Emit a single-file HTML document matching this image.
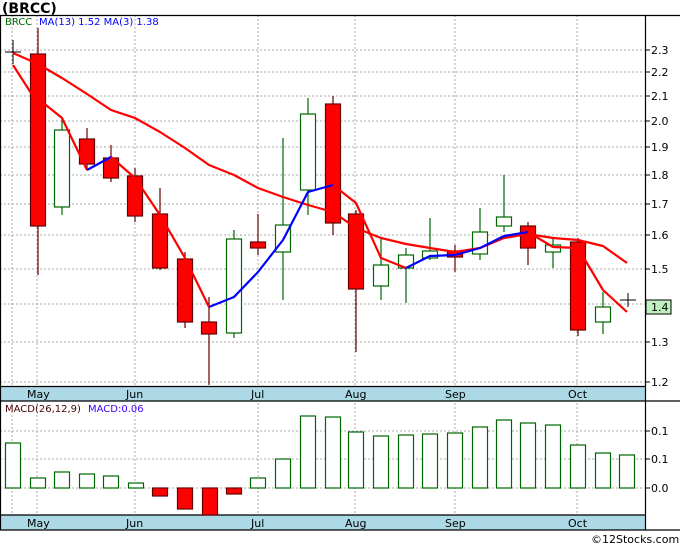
<!DOCTYPE html>
<html><head><style>
body{margin:0;background:#fff;width:680px;height:546px;overflow:hidden;font-family:"DejaVu Sans","Liberation Sans",sans-serif}
</style></head><body>
<svg width="680" height="546" xmlns="http://www.w3.org/2000/svg" font-family="DejaVu Sans, Liberation Sans, sans-serif">
<rect x="0" y="0" width="680" height="15" fill="#fff"/>
<text x="2" y="13" font-size="14" font-weight="bold" fill="#000">(BRCC)</text>
<rect x="0" y="15" width="680" height="515" fill="#fff"/>
<g stroke="#aaa" stroke-dasharray="2,2" stroke-width="1">
<line x1="0" x2="645" y1="50" y2="50"/><line x1="0" x2="645" y1="72" y2="72"/><line x1="0" x2="645" y1="96" y2="96"/><line x1="0" x2="645" y1="121" y2="121"/><line x1="0" x2="645" y1="147" y2="147"/><line x1="0" x2="645" y1="175" y2="175"/><line x1="0" x2="645" y1="204" y2="204"/><line x1="0" x2="645" y1="235" y2="235"/><line x1="0" x2="645" y1="269" y2="269"/><line x1="0" x2="645" y1="304" y2="304"/><line x1="0" x2="645" y1="342" y2="342"/><line x1="0" x2="645" y1="382" y2="382"/>
<line x1="0" x2="645" y1="431" y2="431"/><line x1="0" x2="645" y1="459" y2="459"/><line x1="0" x2="645" y1="488" y2="488"/>
<g>
<line x1="12" x2="12" y1="15" y2="515"/><line x1="37" x2="37" y1="15" y2="515"/><line x1="135" x2="135" y1="15" y2="515"/><line x1="258" x2="258" y1="15" y2="515"/><line x1="355" x2="355" y1="15" y2="515"/><line x1="455" x2="455" y1="15" y2="515"/><line x1="577" x2="577" y1="15" y2="515"/>
</g></g>
<rect x="0" y="387" width="645" height="14" fill="#add8e6"/>
<rect x="0" y="515" width="645" height="15" fill="#add8e6"/>
<g font-size="11" fill="#000">
<text x="27" y="398">May</text><text x="126" y="398">Jun</text><text x="251" y="398">Jul</text><text x="345" y="398">Aug</text><text x="445" y="398">Sep</text><text x="568" y="398">Oct</text>
<text x="27" y="527">May</text><text x="126" y="527">Jun</text><text x="251" y="527">Jul</text><text x="345" y="527">Aug</text><text x="445" y="527">Sep</text><text x="568" y="527">Oct</text>
</g>
<g stroke="#000" stroke-width="1.2" fill="none">
<line x1="0" x2="680" y1="15.5" y2="15.5"/>
<line x1="0" x2="645" y1="386.5" y2="386.5"/><line x1="0" x2="680" y1="401" y2="401"/>
<line x1="0" x2="645" y1="515" y2="515"/><line x1="0" x2="680" y1="530" y2="530"/>
<line x1="645.5" x2="645.5" y1="15" y2="530"/><line x1="0.5" x2="0.5" y1="15" y2="530"/>
</g>
<g font-size="11" fill="#000">
<text x="651" y="54">2.3</text><text x="651" y="76">2.2</text><text x="651" y="100">2.1</text><text x="651" y="125">2.0</text><text x="651" y="151">1.9</text><text x="651" y="179">1.8</text><text x="651" y="208">1.7</text><text x="651" y="239">1.6</text><text x="651" y="273">1.5</text><text x="651" y="346">1.3</text><text x="651" y="386">1.2</text>
<text x="651" y="435">0.1</text><text x="651" y="463">0.1</text><text x="651" y="492">0.0</text>
</g>
<g stroke="#000"><line x1="645" x2="650" y1="50" y2="50"/><line x1="645" x2="650" y1="72" y2="72"/><line x1="645" x2="650" y1="96" y2="96"/><line x1="645" x2="650" y1="121" y2="121"/><line x1="645" x2="650" y1="147" y2="147"/><line x1="645" x2="650" y1="175" y2="175"/><line x1="645" x2="650" y1="204" y2="204"/><line x1="645" x2="650" y1="235" y2="235"/><line x1="645" x2="650" y1="269" y2="269"/><line x1="645" x2="650" y1="342" y2="342"/><line x1="645" x2="650" y1="382" y2="382"/><line x1="645" x2="650" y1="431" y2="431"/><line x1="645" x2="650" y1="459" y2="459"/><line x1="645" x2="650" y1="488" y2="488"/></g>
<rect x="646" y="300" width="25" height="14" fill="#bff0bf" stroke="#000"/>
<text x="651" y="311" font-size="11">1.4</text>
<g font-size="10"><text x="5" y="25" fill="#060">BRCC</text><text x="39" y="25" fill="#00f">MA(13)  1.52  MA(3)  1.38</text>
<text x="5" y="412" fill="#400">MACD(26,12,9)</text><text x="88" y="412" fill="#40f">MACD:0.06</text></g>
<text x="591" y="543" font-size="11" fill="#000">©12Stocks.com</text>
<g stroke="#000"><line x1="5" x2="21" y1="52" y2="52"/><line x1="13" x2="13" y1="40" y2="64"/><line x1="620" x2="636" y1="300" y2="300"/><line x1="628" x2="628" y1="293" y2="307"/></g>
<g stroke-width="1.2">
<g stroke="#600"><line x1="38" x2="38" y1="28" y2="275"/><line x1="87" x2="87" y1="128" y2="170"/><line x1="111" x2="111" y1="145" y2="182"/><line x1="135" x2="135" y1="168" y2="222"/><line x1="160" x2="160" y1="188" y2="270"/><line x1="185" x2="185" y1="252" y2="328"/><line x1="209" x2="209" y1="297" y2="385"/><line x1="258" x2="258" y1="214" y2="255"/><line x1="333" x2="333" y1="96" y2="235"/><line x1="356" x2="356" y1="210" y2="352"/><line x1="455" x2="455" y1="245" y2="272"/><line x1="528" x2="528" y1="222" y2="265"/><line x1="578" x2="578" y1="238" y2="336"/></g>
<g stroke="#060"><line x1="62" x2="62" y1="118" y2="215"/><line x1="234" x2="234" y1="230" y2="338"/><line x1="283" x2="283" y1="138" y2="300"/><line x1="308" x2="308" y1="98" y2="215"/><line x1="381" x2="381" y1="238" y2="300"/><line x1="406" x2="406" y1="248" y2="303"/><line x1="430" x2="430" y1="218" y2="260"/><line x1="480" x2="480" y1="208" y2="260"/><line x1="504" x2="504" y1="175" y2="232"/><line x1="553" x2="553" y1="238" y2="268"/><line x1="603" x2="603" y1="292" y2="334"/></g>
</g>
<g fill="#f00" stroke="#600" stroke-width="1.2">
<rect x="30.5" y="54" width="15" height="172"/><rect x="79.5" y="139" width="15" height="25"/><rect x="103.5" y="158" width="15" height="20"/><rect x="127.5" y="176" width="15" height="40"/><rect x="152.5" y="214" width="15" height="54"/><rect x="177.5" y="259" width="15" height="63"/><rect x="201.5" y="322" width="15" height="12"/><rect x="250.5" y="242" width="15" height="6"/><rect x="325.5" y="104" width="15" height="119"/><rect x="348.5" y="214" width="15" height="75"/><rect x="447.5" y="251" width="15" height="6"/><rect x="520.5" y="226" width="15" height="22"/><rect x="570.5" y="242" width="15" height="88"/>
</g>
<g fill="#fff" stroke="#060" stroke-width="1.2">
<rect x="54.5" y="130" width="15" height="77"/><rect x="226.5" y="239" width="15" height="94"/><rect x="275.5" y="225" width="15" height="27"/><rect x="300.5" y="114" width="15" height="76"/><rect x="373.5" y="265" width="15" height="21"/><rect x="398.5" y="255" width="15" height="13"/><rect x="422.5" y="251" width="15" height="7"/><rect x="472.5" y="232" width="15" height="22"/><rect x="496.5" y="217" width="15" height="9"/><rect x="545.5" y="245" width="15" height="7"/><rect x="595.5" y="307" width="15" height="15"/>
</g>
<g fill="none" stroke-width="2.2" stroke-linejoin="round">
<polyline stroke="#f00" points="13,53 38,64 62,78 87,94 111,110 135,118 160,132 185,148 209,165 234,175 258,188 283,197 308,205 333,212 356,228 381,238 406,244 430,248 455,252 480,248 504,238 528,234 553,238 578,240 603,246 627,263"/>
<polyline stroke="#f00" points="13,65 31,93 62,118 87,170"/>
<polyline stroke="#00f" points="87,170 111,157"/>
<polyline stroke="#f00" points="111,157 135,178 160,215 185,258 209,307"/>
<polyline stroke="#00f" points="209,307 234,297 258,272 283,240 308,192 333,185"/>
<polyline stroke="#f00" points="333,185 356,203 381,258 406,268"/>
<polyline stroke="#00f" points="406,268 430,256 455,255 480,248 504,236 528,232"/>
<polyline stroke="#f00" points="528,232 553,247 578,248 603,290 627,312"/>
</g>
<g fill="#fff" stroke="#060" stroke-width="1.2">
<rect x="5.5" y="443" width="15" height="45"/><rect x="30.5" y="478" width="15" height="10"/><rect x="54.5" y="472" width="15" height="16"/><rect x="79.5" y="474" width="15" height="14"/><rect x="103.5" y="476" width="15" height="12"/><rect x="128.5" y="483" width="15" height="5"/>
<rect x="250.5" y="478" width="15" height="10"/><rect x="275.5" y="459" width="15" height="29"/><rect x="300.5" y="416" width="15" height="72"/><rect x="325.5" y="417" width="15" height="71"/><rect x="348.5" y="432" width="15" height="56"/><rect x="373.5" y="436" width="15" height="52"/><rect x="398.5" y="435" width="15" height="53"/><rect x="422.5" y="434" width="15" height="54"/><rect x="447.5" y="433" width="15" height="55"/><rect x="472.5" y="427" width="15" height="61"/><rect x="496.5" y="420" width="15" height="68"/><rect x="520.5" y="423" width="15" height="65"/><rect x="545.5" y="425" width="15" height="63"/><rect x="570.5" y="445" width="15" height="43"/><rect x="595.5" y="453" width="15" height="35"/><rect x="619.5" y="455" width="15" height="33"/>
</g>
<g fill="#f00" stroke="#600" stroke-width="1.2">
<rect x="152.5" y="488" width="15" height="8"/><rect x="177.5" y="488" width="15" height="21"/><rect x="202.5" y="488" width="15" height="27"/><rect x="226.5" y="488" width="15" height="6"/>
</g>
</svg>
</body></html>
